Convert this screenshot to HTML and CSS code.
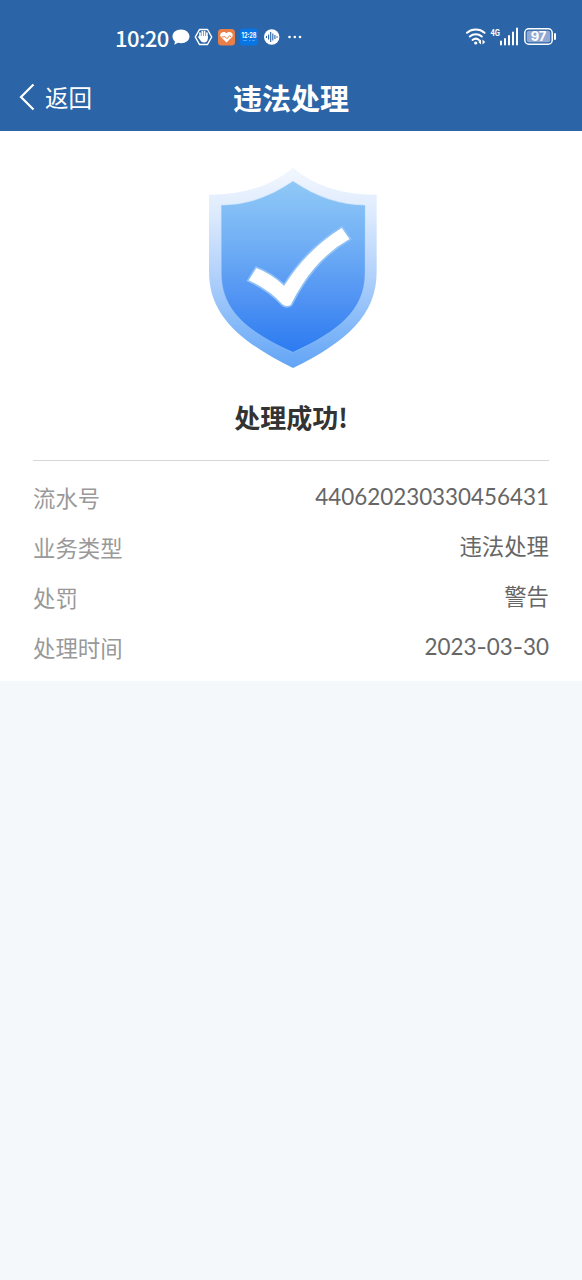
FILE: index.html
```html
<!DOCTYPE html>
<html lang="zh-CN">
<head>
<meta charset="utf-8">
<title>违法处理</title>
<link rel="stylesheet" href="styles.css">
</head>
<body>
<header class="top">
  <div class="status">
    <span class="clock">10:20</span>
    <svg class="notices" width="132" height="24" viewBox="0 0 132 24">
      <path d="M11 4.500c-5 0-8.500 3.200-8.500 7 0 2 1 3.800 2.500 5l-.7 3.300 3.700-2c1 .3 2 .4 3 .4 5 0 8.500-3 8.500-6.700s-3.500-7-8.500-7z" fill="#fff"/>
      <path d="M29.500 4.500h8L41.700 12l-4.200 7.500h-8L25.300 12z" fill="none" stroke="#fff" stroke-width="1.500" stroke-linejoin="round"/>
      <path d="M30 8v5M32.300 6.500v6M34.600 6.500v6M36.900 8v5" stroke="#fff" stroke-width="1.700" stroke-linecap="round"/>
      <path d="M29.200 11h8.600v2.500c0 2.500-1.500 4-3.800 4-1.700 0-2.800-.8-3.700-2.200l-2.500-3.500z" fill="#fff"/>
      <rect x="48" y="4" width="17" height="16.500" rx="3.500" fill="#e97e49"/>
      <path d="M56.500 17.500l-5.300-5.200c-3-3.500 2-7.500 5.300-4 3.300-3.500 8.300.5 5.300 4z" fill="#fff"/>
      <path d="M51.500 12l3.500-.3 2 2 2.500-3 1.500 1" fill="none" stroke="#e97e49" stroke-width="1"/>
      <rect x="70" y="3.500" width="18" height="17" rx="3" fill="#0875e5"/>
      <text class="tiny" x="79" y="12.500" text-anchor="middle" textLength="15" lengthAdjust="spacingAndGlyphs">12:28</text>
      <path d="M73 15.500h4M79 15.500h1.500M82 15.500h3" stroke="#4da2f0"/>
      <circle cx="101.700" cy="12" r="7.700" fill="#fff"/>
      <path d="M96.500 11v2M98.600 9.500v5M100.700 7v10M102.800 8.500v7M104.900 10v4M107 11.300v1.400" stroke="#2b65a7" stroke-width="1.100"/>
      <g fill="#fff"><circle cx="119.500" cy="12" r="1.300"/><circle cx="124.800" cy="12" r="1.300"/><circle cx="130" cy="12" r="1.300"/></g>
    </svg>
    <svg class="signals" width="94" height="26" viewBox="0 0 94 26">
      <g fill="none" stroke="#fff" stroke-width="2" stroke-linecap="round">
        <path d="M3 8.800c5-4.300 12.500-4.300 17.500 0"/>
        <path d="M5.800 12.500c3.500-3 8.500-3 12 0"/>
        <path d="M8.500 16c2-1.600 4.700-1.600 6.500 0"/>
      </g>
      <circle cx="11.700" cy="19" r="1.600" fill="#fff"/>
      <path d="M17 15.500v5l-2.700-2.500zM18.500 15.500v5l2.700-2.500z" fill="#fff"/>
      <text class="network" x="26.500" y="11.500" textLength="9.500" lengthAdjust="spacingAndGlyphs">4G</text>
      <path d="M37 17.500v3M41 15v5.500M45 12v8.500M49 8.500v12M53 4.500v16" stroke="#fff" stroke-width="2" stroke-linecap="round"/>
      <rect x="60.800" y="4.800" width="27.400" height="15.400" rx="4" fill="none" stroke="#fff" stroke-width="1.500"/>
      <rect x="62.800" y="6.800" width="23.400" height="11.400" rx="2" fill="#8fa9d4"/>
      <path d="M91 10v5" stroke="#fff" stroke-width="2" stroke-linecap="round"/>
      <text class="battery" x="74.500" y="17.200" text-anchor="middle">97</text>
    </svg>
  </div>
  <nav class="nav">
    <a class="back">
      <svg width="18" height="28" viewBox="0 0 18 28"><path d="M15.500 1.500L3 14l12.500 12.500" fill="none" stroke="#fff" stroke-width="2.200"/></svg>
      <span>返回</span>
    </a>
    <h1 class="title">违法处理</h1>
  </nav>
</header>
<main class="card">
  <svg class="shield" width="200" height="220" viewBox="0 0 600 660">
    <defs>
      <linearGradient id="rim" x1="0" y1="0" x2="0" y2="1">
        <stop offset="0" stop-color="#f2f7fe"/><stop offset=".22" stop-color="#deebfd"/><stop offset=".55" stop-color="#b0d0fb"/><stop offset=".8" stop-color="#82b8f8"/><stop offset="1" stop-color="#62a4f5"/>
      </linearGradient>
      <linearGradient id="face" x1="0" y1="0" x2="0" y2="1">
        <stop offset="0" stop-color="#90c9f6"/><stop offset=".35" stop-color="#72b0f5"/><stop offset=".7" stop-color="#4f92f3"/><stop offset="1" stop-color="#2b7bf1"/>
      </linearGradient>
    </defs>
    <path d="M294 38Q390 120 545 119V350C545 480 455 560 294 639C135 560 42 480 42 350V119Q198 120 294 38Z" fill="url(#rim)"/>
    <path d="M294 79Q400 151 510 151V355C510 465 430 530 294 592C155 530 79 465 79 355V151Q190 151 294 79Z" fill="url(#face)" stroke="#a5cff9" stroke-opacity=".6" stroke-width="2"/>
    <path d="M183 336Q230 354 267 389Q335 280 441 215L467 253C380 302 330 370 289 451Q275 461 261 450Q220 405 158 377Z" fill="#fff" stroke="#8fc0f6" stroke-width="5"/>
  </svg>
  <h2 class="result">处理成功!</h2>
  <dl class="details">
    <div class="row"><dt>流水号</dt><dd>440620230330456431</dd></div>
    <div class="row"><dt>业务类型</dt><dd>违法处理</dd></div>
    <div class="row"><dt>处罚</dt><dd>警告</dd></div>
    <div class="row"><dt>处理时间</dt><dd>2023<span class="dash">-</span>03<span class="dash">-</span>30</dd></div>
  </dl>
</main>
</body>
</html>
```
FILE: styles.css
```css
* {
  box-sizing: border-box;
}

body {
  margin: 0;
  min-height: 1280px;
  background: #f4f8fb;
  font-family: "Noto Sans CJK SC", sans-serif;
}

.top {
  height: 131px;
  background: #2b65a7;
  color: #fff;
}

.status {
  display: flex;
  align-items: center;
  height: 62px;
  padding: 12px 24px 0 115px;
}

.clock {
  width: 55px;
  font: 500 22px/24px "Noto Sans CJK SC", sans-serif;
  letter-spacing: -0.6px;
}

.signals {
  margin-left: auto;
}

.tiny {
  fill: #fff;
  font: 700 7px Inter, sans-serif;
}

.network {
  fill: #fff;
  font: 700 9px Roboto, sans-serif;
}

.battery {
  fill: #fff;
  font: 700 13px Inter, sans-serif;
}

.nav {
  display: grid;
  grid-template-columns: 1fr auto 1fr;
  align-items: center;
  height: 69px;
  padding: 0 18px;
}

.back {
  display: flex;
  align-items: center;
  gap: 9px;
  font-size: 23.5px;
  line-height: 34px;
}

.title {
  margin: 0;
  font-size: 29px;
  font-weight: 700;
  line-height: 42px;
}

.card {
  height: 550px;
  padding: 24px 33px 0;
  background: #fff;
}

.shield {
  display: block;
  margin-left: 162px;
}

.result {
  margin: 22px 0 24px;
  color: #333;
  font-size: 26px;
  font-weight: 700;
  line-height: 39px;
  text-align: center;
}

.details {
  margin: 0;
  padding-top: 11px;
  border-top: 1px solid #d8d8d8;
}

.row {
  display: flex;
  justify-content: space-between;
  height: 50px;
  font-size: 22.4px;
  line-height: 50px;
}

dt {
  color: #999;
}

dd {
  margin: 0;
  color: #666;
  font-family: Lato, "Noto Sans CJK SC", sans-serif;
}

.dash {
  font-family: Inter, sans-serif;
}
```
